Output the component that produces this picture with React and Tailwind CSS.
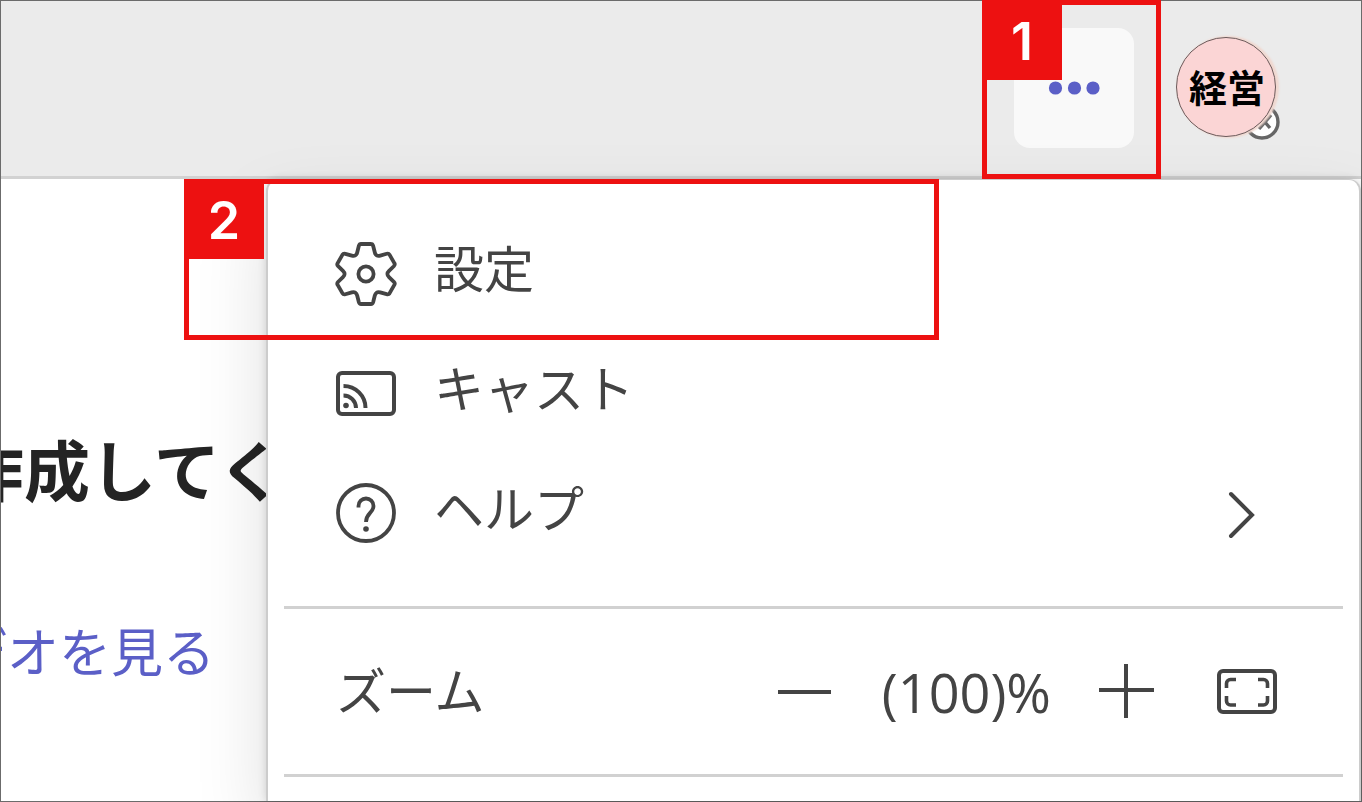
import React, { useState } from 'react';

// one tooth of the gear, from the top right corner to the next valley; the rest is rotated from it
const TOOTH = [
  [5, -30],
  [-5, -30],
  [-6.6, -30],
  [-7.2, -28],
  [-8.8, -21.5],
  [-9.9, -17.1],
  [-14.2, -18.4],
  [-20.6, -20.2],
  [-22.7, -20.7],
  [-23.5, -19.3],
];

const gearPath = () => {
  let d = '';
  for (let i = 0; i < 6; i++) {
    const a = (-i * Math.PI) / 3;
    const p = TOOTH.map(([x, y]) => {
      const rx = x * Math.cos(a) - y * Math.sin(a);
      const ry = x * Math.sin(a) + y * Math.cos(a);
      return `${rx.toFixed(2)} ${ry.toFixed(2)}`;
    });
    d += `${i === 0 ? 'M' : 'L'}${p[0]} L${p[1]} Q${p[2]} ${p[3]} L${p[4]} Q${p[5]} ${p[6]} L${p[7]} Q${p[8]} ${p[9]} `;
  }
  return `${d}Z`;
};

const GearIcon = () => (
  <svg viewBox="-32 -32 64 64" className="w-16 h-16" fill="none" stroke="currentColor" strokeWidth="3.8" strokeLinejoin="round">
    <path d={gearPath()} />
    <circle r="7.6" />
  </svg>
);

const CastIcon = () => (
  <svg viewBox="0 0 64 64" className="w-16 h-16" fill="none" stroke="currentColor" strokeWidth="4">
    <rect x="4" y="11" width="56" height="41" rx="4" />
    <circle cx="12" cy="43.5" r="2.8" fill="currentColor" stroke="none" />
    <path d="M9.5 33.5A12.5 12.5 0 0 1 22 46M9.5 24A22 22 0 0 1 31.5 46" />
  </svg>
);

const HelpIcon = () => (
  <svg viewBox="0 0 64 64" className="w-16 h-16" fill="none" stroke="currentColor" strokeWidth="3.8">
    <circle cx="32" cy="31" r="28" />
    <path d="M24.5 25.5V24a7.5 7.5 0 0 1 15 0c0 7-7.5 7-7.5 16" />
    <circle cx="32" cy="47" r="2.8" fill="currentColor" stroke="none" />
  </svg>
);

const ChevronIcon = () => (
  <svg viewBox="0 0 64 64" className="w-16 h-16" fill="none" stroke="currentColor" strokeWidth="4" strokeLinecap="round">
    <path d="M16 12L37 33L16 54" />
  </svg>
);

const FullScreenIcon = () => (
  <svg viewBox="0 0 64 64" className="w-16 h-16" fill="none" stroke="currentColor" strokeWidth="4">
    <rect x="4" y="11" width="56" height="41" rx="4" />
    <path
      strokeWidth="3.6"
      d="M11.5 28V23.5a4 4 0 0 1 4-4H21M43 19.5H48.5a4 4 0 0 1 4 4V28M52.5 36V41a4 4 0 0 1-4 4H43M21 45H15.5a4 4 0 0 1-4-4V36"
    />
  </svg>
);

const Callout = ({ number, className }) => (
  <div className={`absolute z-20 pointer-events-none border-5 border-[#ed1111] ${className}`}>
    <span className="-mt-[5px] -ml-[5px] flex w-20 h-20 items-center justify-center bg-[#ed1111] pt-1 text-white font-['Inter',sans-serif] font-semibold text-[52px] leading-none">
      {number}
    </span>
  </div>
);

const MenuItem = ({ icon, label, hasSubmenu, children }) => (
  <li className="relative">
    <button type="button" className="flex w-full h-30 items-center pl-[66px] pr-20 text-left">
      {icon}
      <span className="ml-9 mb-4 flex-1 text-[50px] leading-[60px]">{label}</span>
      {hasSubmenu && <ChevronIcon />}
    </button>
    {children}
  </li>
);

const App = () => {
  const [zoom, setZoom] = useState(100);

  return (
    <div className="flex min-h-screen flex-col border border-[#6b6b6b] bg-white text-[#444444] font-['Noto_Sans_CJK_JP',sans-serif]">
      {/* Title bar */}
      <header className="flex h-[178px] shrink-0 justify-end gap-[42px] border-b-3 border-[#d2d2d2] bg-[#ebebeb] pt-[27px] pr-[85px]">
        <div className="relative w-30 h-30">
          <button type="button" aria-label="設定など" className="flex h-full w-full items-center justify-center rounded-2xl bg-[#f9f9f9] text-[#5b5fc7]">
            <svg viewBox="0 0 52 14" className="w-13 h-4" fill="currentColor">
              <circle cx="7.5" cy="7" r="6.6" />
              <circle cx="26.5" cy="7" r="6.6" />
              <circle cx="45" cy="7" r="6.6" />
            </svg>
          </button>
          <Callout number="1" className="-top-7 -left-8 h-[179px] w-[179px]" />
        </div>
        <button type="button" className="relative mt-[9px] w-25 h-25">
          <svg viewBox="0 0 36 36" className="absolute -right-1 -bottom-[3px] w-9 h-9" fill="white" stroke="#666666" strokeWidth="3.4">
            <circle cx="18" cy="18" r="16" />
            <path d="M14 10L26 24M27 11L15 25" />
          </svg>
          <span className="relative flex h-full w-full items-center justify-center rounded-full border border-[#6b5a5a] bg-[#fbd5d5] pb-0.5 pl-0.5 text-[38px] leading-none font-bold text-black shadow-[2px_0_2px_1px_#f0d8d0]">
            経営
          </span>
        </button>
      </header>

      <div className="flex flex-1">
        {/* Page content behind the menu */}
        <main className="w-[265px] shrink-0 overflow-hidden whitespace-nowrap">
          <h1 className="-ml-[43px] mt-[240px] text-[66px] leading-[96px] font-bold text-[#242424]">作成してく</h1>
          <a href="#video" className="-ml-[46px] mt-[97px] block text-[52px] leading-[76px] text-[#5b5fc7]">
            デオを見る
          </a>
        </main>

        {/* Menu */}
        <nav className="relative min-w-0 flex-1 rounded-t-xl border-x-2 border-t border-[#cccccc] bg-white pt-[34px] shadow-[0_32px_72px_rgba(0,0,0,0.13),0_0_8px_rgba(0,0,0,0.14)]">
          <ul>
            <MenuItem icon={<GearIcon />} label="設定">
              <Callout number="2" className="-top-[35px] -left-[84px] h-[161px] w-[755px]" />
            </MenuItem>
            <MenuItem icon={<CastIcon />} label="キャスト" />
            <MenuItem icon={<HelpIcon />} label="ヘルプ" hasSubmenu />
          </ul>
          <hr className="mx-4 mt-8 border-t-3 border-[#d1d1d1]" />
          <div className="flex h-[165px] items-center pl-[68px] pr-20">
            <span className="mb-2 flex-1 text-[50px] leading-[60px]">ズーム</span>
            <button type="button" aria-label="縮小" onClick={() => setZoom(zoom - 10)}>
              <svg viewBox="0 0 56 56" className="w-14 h-14" stroke="currentColor" strokeWidth="4">
                <path d="M0 28H53" />
              </svg>
            </button>
            <output className="mx-12 font-['Open_Sans',sans-serif] text-[54px] leading-[60px]">({zoom})%</output>
            <button type="button" aria-label="拡大" onClick={() => setZoom(zoom + 10)}>
              <svg viewBox="0 0 56 56" className="w-14 h-14" stroke="currentColor" strokeWidth="4">
                <path d="M0 26H55M27 0V54" />
              </svg>
            </button>
            <button type="button" aria-label="全画面表示" className="ml-15">
              <FullScreenIcon />
            </button>
          </div>
          <hr className="mx-4 border-t-3 border-[#d1d1d1]" />
        </nav>
      </div>
    </div>
  );
};

export default App;
